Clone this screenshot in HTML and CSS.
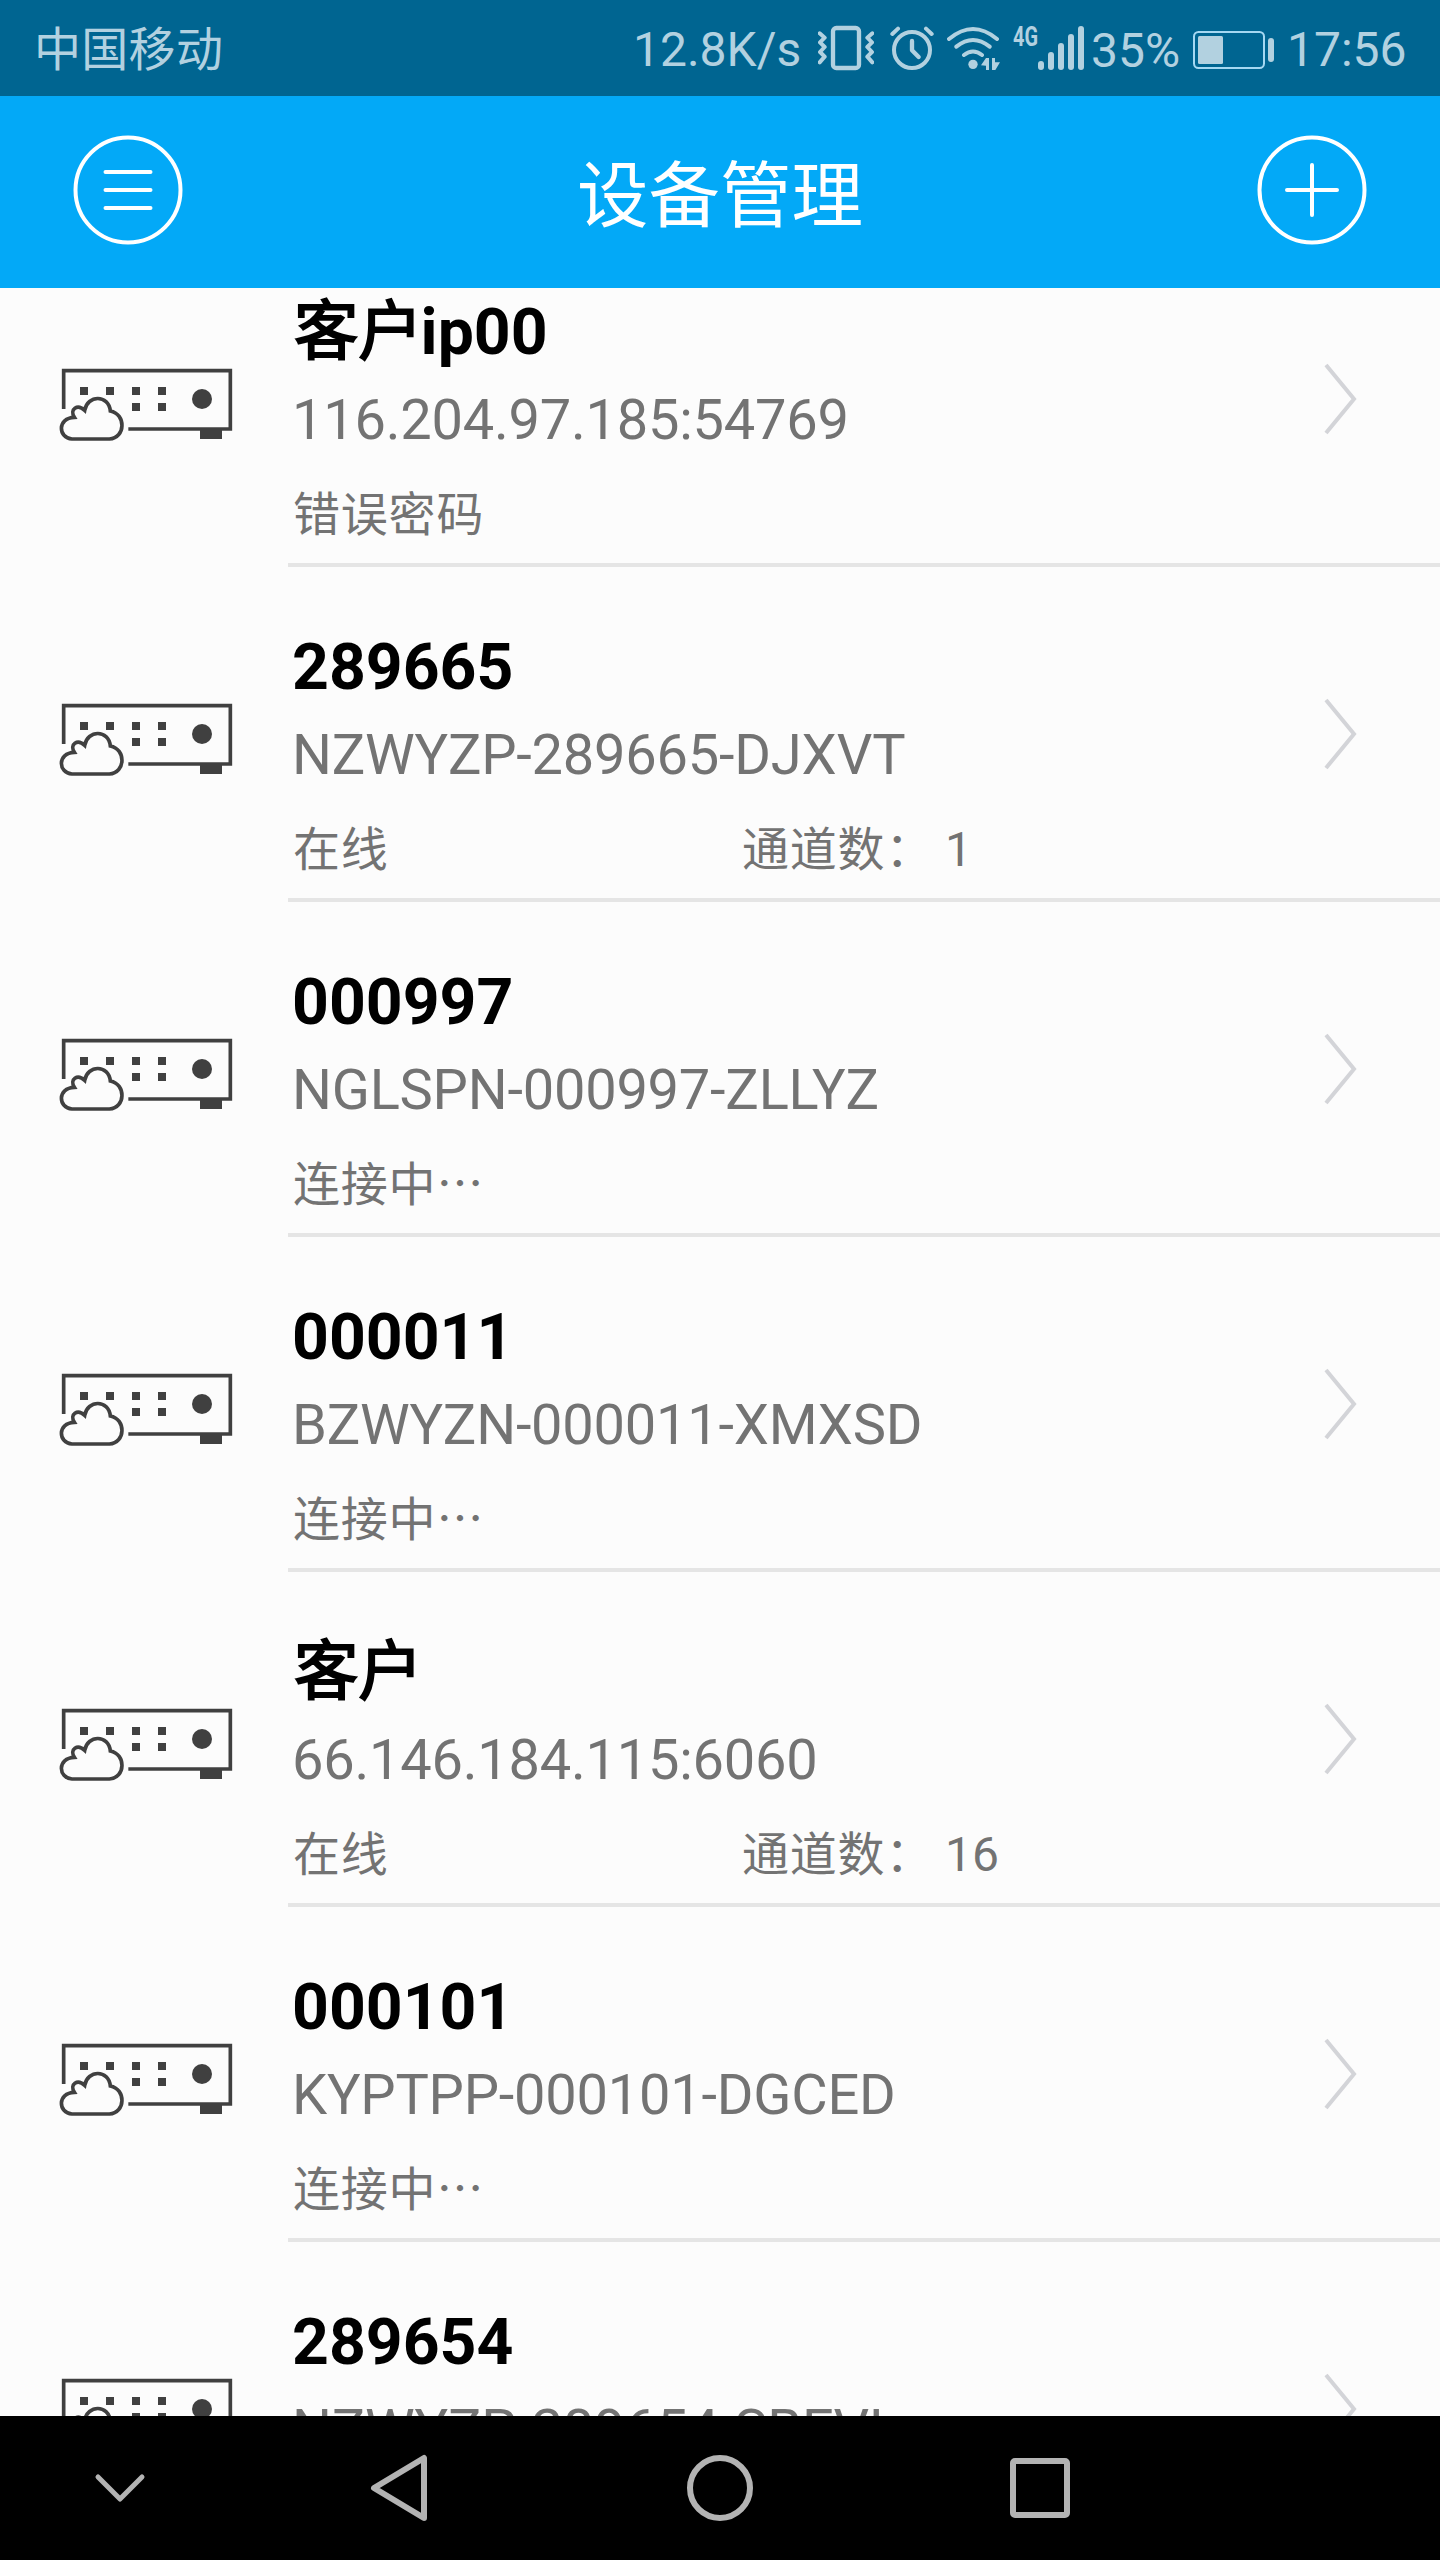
FILE: index.html
```html
<!DOCTYPE html>
<html lang="zh-CN">
<head>
<meta charset="utf-8">
<title>设备管理</title>
<link rel="stylesheet" href="styles.css">
</head>
<body>
<svg class="defs" width="0" height="0">
  <symbol id="device" viewBox="0 0 660 390">
    <path d="M71 207V92H571V267H265" fill="none" stroke="#404040" stroke-width="11"/>
    <path d="M480 267h66v30h-66zM120 141h24v24h-24zM198 141h24v24h-24zM276 141h24v24h-24zM354 141h24v24h-24zM276 189h24v24h-24zM354 189h24v24h-24z" fill="#404040"/>
    <circle cx="486" cy="177" r="30" fill="#404040"/>
    <path d="M96 297C54 294 51 234 103 232C88 208 112 191 134 211C142 164 206 163 211 213C258 222 258 293 208 297Z" fill="none" stroke="#404040" stroke-width="11"/>
  </symbol>
  <symbol id="chevron" viewBox="0 0 36 72">
    <path d="M4 2L32 36L4 70" fill="none" stroke="#d3d4d8" stroke-width="4"/>
  </symbol>
</svg>
<div class="screen">
  <div class="status-bar">
    <span class="carrier">中国移动</span>
    <span class="speed">12.8K/s</span>
    <svg class="i-vibrate" viewBox="594 75 168 138" width="56" height="46" fill="none" stroke="currentColor">
      <rect x="639" y="84" width="78" height="120" rx="10" stroke-width="13"/>
      <path d="M599 100L614 113L600 127L614 141L600 156L614 170L599 187M757 100L742 113L756 127L742 141L756 156L742 170L757 187" stroke-width="12" stroke-linecap="round" stroke-linejoin="round"/>
    </svg>
    <svg class="i-alarm" viewBox="810 75 132 138" width="44" height="46" fill="none" stroke="currentColor" stroke-width="12" stroke-linecap="round">
      <circle cx="876" cy="150" r="54"/>
      <path d="M876 123V151L896 171" stroke-width="13" stroke-linejoin="round"/>
      <path d="M817 102L834 86M935 102L918 86"/>
    </svg>
    <svg class="i-wifi" viewBox="981 75 162 138" width="54" height="46" fill="none" stroke="currentColor" stroke-width="12" stroke-linecap="round">
      <path d="M987 117Q1059 57 1131 117M1009 140Q1059 100 1109 140M1032 165Q1059 144 1086 165"/>
      <circle cx="1059" cy="193" r="14" fill="currentColor" stroke="none"/>
      <path d="M1083 196L1098 174H1107V210H1098V197ZM1116 174H1125V187H1140L1126 210H1116Z" fill="currentColor" stroke="none"/>
    </svg>
    <svg class="i-signal" viewBox="0 0 72 46" width="72" height="46" fill="currentColor">
      <text class="net" x="0" y="21" textLength="25" lengthAdjust="spacingAndGlyphs">4G</text>
      <rect x="25" y="36" width="6" height="9" rx="3"/>
      <rect x="35" y="27" width="6" height="18" rx="3"/>
      <rect x="45" y="18" width="6" height="27" rx="3"/>
      <rect x="55" y="9" width="6" height="36" rx="3"/>
      <rect x="65" y="1" width="6" height="44" rx="3"/>
    </svg>
    <span class="percent">35%</span>
    <svg class="i-battery" viewBox="0 0 82 40" width="82" height="40">
      <rect x="1" y="2" width="70" height="36" rx="4.500" fill="none" stroke="#a5d8f2" stroke-width="2"/>
      <rect x="5" y="6" width="25" height="28" rx="1.500" fill="currentColor"/>
      <rect x="75" y="8" width="6" height="24" rx="3" fill="currentColor"/>
    </svg>
    <span class="time">17:56</span>
  </div>
  <div class="header">
    <svg viewBox="0 0 112 112" width="112" height="112" fill="none" stroke="#fff" stroke-width="4">
      <circle cx="56" cy="56" r="52.500"/>
      <path d="M33.500 38H78.500M33.500 56H78.500M33.500 74H78.500" stroke-linecap="round"/>
    </svg>
    <h1>设备管理</h1>
    <svg viewBox="0 0 112 112" width="112" height="112" fill="none" stroke="#fff" stroke-width="4">
      <circle cx="56" cy="56" r="52.500"/>
      <path d="M31 56H81M56 31V81" stroke-linecap="round"/>
    </svg>
  </div>
  <div class="list">
    <div class="row first">
      <svg class="device"><use href="#device"/></svg>
      <div class="body"><div class="text"><div class="name"><span class="han">客户</span>ip00</div><div class="uid">116.204.97.185:54769</div><div class="state"><span>错误密码</span></div></div><svg class="chevron"><use href="#chevron"/></svg></div>
    </div>
    <div class="row">
      <svg class="device"><use href="#device"/></svg>
      <div class="body"><div class="text"><div class="name">289665</div><div class="uid">NZWYZP-289665-DJXVT</div><div class="state"><span>在线</span><span>通道数：</span><span class="count">1</span></div></div><svg class="chevron"><use href="#chevron"/></svg></div>
    </div>
    <div class="row">
      <svg class="device"><use href="#device"/></svg>
      <div class="body"><div class="text"><div class="name">000997</div><div class="uid">NGLSPN-000997-ZLLYZ</div><div class="state"><span>连接中<i class="dots">⋯</i></span></div></div><svg class="chevron"><use href="#chevron"/></svg></div>
    </div>
    <div class="row">
      <svg class="device"><use href="#device"/></svg>
      <div class="body"><div class="text"><div class="name">000011</div><div class="uid">BZWYZN-000011-XMXSD</div><div class="state"><span>连接中<i class="dots">⋯</i></span></div></div><svg class="chevron"><use href="#chevron"/></svg></div>
    </div>
    <div class="row">
      <svg class="device"><use href="#device"/></svg>
      <div class="body"><div class="text"><div class="name"><span class="han">客户</span></div><div class="uid">66.146.184.115:6060</div><div class="state"><span>在线</span><span>通道数：</span><span class="count">16</span></div></div><svg class="chevron"><use href="#chevron"/></svg></div>
    </div>
    <div class="row">
      <svg class="device"><use href="#device"/></svg>
      <div class="body"><div class="text"><div class="name">000101</div><div class="uid">KYPTPP-000101-DGCED</div><div class="state"><span>连接中<i class="dots">⋯</i></span></div></div><svg class="chevron"><use href="#chevron"/></svg></div>
    </div>
    <div class="row">
      <svg class="device"><use href="#device"/></svg>
      <div class="body"><div class="text"><div class="name">289654</div><div class="uid">NZWYZP-289654-SBEVL</div></div><svg class="chevron"><use href="#chevron"/></svg></div>
    </div>
  </div>
  <div class="nav">
    <svg class="n-down" viewBox="0 0 54 32" width="54" height="32"><path d="M5 5L27 27L49 5" stroke-width="5"/></svg>
    <svg class="n-back" viewBox="0 0 60 70" width="60" height="70"><path d="M54 5V65L4 35Z" stroke-width="6"/></svg>
    <svg class="n-home" viewBox="0 0 70 70" width="70" height="70"><circle cx="35" cy="35" r="30" stroke-width="6"/></svg>
    <svg class="n-recent" viewBox="0 0 60 60" width="60" height="60"><rect x="3" y="3" width="54" height="54" rx="2" stroke-width="6"/></svg>
  </div>
</div>
</body>
</html>
```
FILE: styles.css
```css
* { box-sizing: border-box; }
body { margin: 0; background: #fcfcfc; font-family: Roboto, "Noto Sans CJK SC", sans-serif; }
svg { display: block; flex: none; }
.defs { position: absolute; }
.screen { display: flex; flex-direction: column; width: 1440px; height: 2560px; overflow: hidden; }

.status-bar { flex: none; display: flex; align-items: center; height: 96px; padding: 0 0 0 34px; background: #006591; color: #b2d1e0; font-size: 48px; line-height: 56px; white-space: nowrap; }
.carrier { width: 599px; padding-top: 4px; font-size: 47px; letter-spacing: 0.300px; }
.speed { width: 185px; padding-top: 3px; }
.i-vibrate { margin-right: 16px; }
.i-alarm { margin-right: 13px; }
.i-wifi { margin-right: 12px; }
.i-signal { margin-right: 6px; overflow: visible; }
.net { font: 700 28px Roboto, sans-serif; }
.percent { width: 102px; padding-top: 6px; }
.i-battery { margin: 4px 12px 0 0; }
.time { padding-top: 3px; }

.header { flex: none; display: flex; align-items: center; justify-content: space-between; height: 192px; padding: 0 72px 4px; background: #03a9f7; color: #fff; }
.header h1 { margin: 0; padding-top: 13px; font-size: 71.500px; font-weight: 400; line-height: 80px; }

.list { flex: 1; min-height: 0; overflow: hidden; }
.row { display: flex; height: 335px; padding-left: 40px; }
.first { margin-top: -56px; }
.device { width: 220px; height: 130px; margin: 108px 28px 0 0; }
.body { flex: 1; display: flex; border-bottom: 4px solid #e5e5e5; }
.text { flex: 1; padding: 62px 0 0 4px; }
.name { font-size: 64.300px; font-weight: 700; line-height: 76px; color: #000; }
.han { margin: 0 -2px 0 2px; font-weight: 400; -webkit-text-stroke: 2px #000; }
.uid { margin-top: 17px; font-size: 56px; line-height: 66px; letter-spacing: -0.230px; color: #737373; }
.state { display: grid; grid-template-columns: 449px 203px auto; margin-top: 34px; padding-left: 1px; font-size: 47px; line-height: 56px; letter-spacing: 0.800px; color: #737373; }
.count { font-size: 48px; letter-spacing: 0; }
.dots { font-family: "Noto Sans CJK SC", sans-serif; font-style: normal; line-height: 0; }
.chevron { width: 36px; height: 72px; margin: 131px 82px 0 0; }

.nav { flex: none; display: flex; align-items: center; height: 144px; padding-left: 93px; background: #000; fill: none; stroke: #b3b3b3; stroke-linejoin: round; stroke-linecap: round; }
.n-down { margin-right: 223px; }
.n-back { margin-right: 255px; }
.n-home { margin-right: 255px; }
```
